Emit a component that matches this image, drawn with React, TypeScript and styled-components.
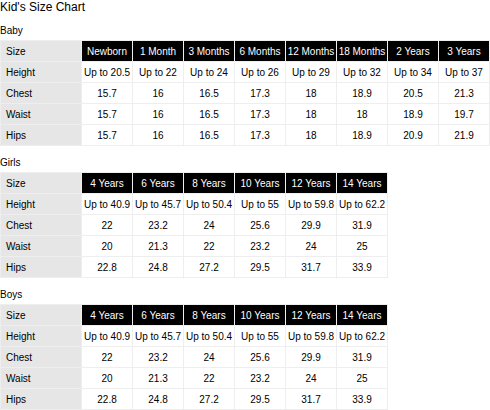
import React from 'react'
import styled, { createGlobalStyle } from 'styled-components'

const GlobalStyle = createGlobalStyle`
  html, body {
    margin: 0;
    padding: 0;
    background: #fff;
  }
  body {
    font-family: "Liberation Sans", Arial, sans-serif;
    color: #000;
  }
`

const Page = styled.div`
  width: 490px;
`

const Title = styled.h1`
  margin: 0 0 2px;
  font-size: 12px;
  line-height: 14px;
  font-weight: normal;
  color: #000;
`

const Section = styled.section`
  margin-top: 10px;
`

const SectionHeading = styled.h2`
  margin: 0 0 2px;
  font-size: 10px;
  line-height: 14px;
  font-weight: normal;
  color: #000;
`

const Table = styled.table`
  border-collapse: collapse;
  font-size: 10px;
  table-layout: fixed;
`

const Cell = styled.td<{ $head?: boolean }>`
  width: 50px;
  height: 20px;
  padding: 0;
  border: 1px solid #eee;
  text-align: center;
  white-space: nowrap;
  background: ${p => (p.$head ? '#000' : '#fff')};
  color: ${p => (p.$head ? '#fff' : '#000')};
`

const LabelCell = styled.th`
  width: 75px;
  height: 20px;
  padding: 0 0 0 5px;
  border: 1px solid #eee;
  text-align: left;
  font-weight: normal;
  background: #e6e6e6;
  color: #000;
`

interface Chart {
  name: string
  sizes: string[]
  rows: { label: string; values: string[] }[]
}

const charts: Chart[] = [
  {
    name: 'Baby',
    sizes: ['Newborn', '1 Month', '3 Months', '6 Months', '12 Months', '18 Months', '2 Years', '3 Years'],
    rows: [
      { label: 'Height', values: ['Up to 20.5', 'Up to 22', 'Up to 24', 'Up to 26', 'Up to 29', 'Up to 32', 'Up to 34', 'Up to 37'] },
      { label: 'Chest', values: ['15.7', '16', '16.5', '17.3', '18', '18.9', '20.5', '21.3'] },
      { label: 'Waist', values: ['15.7', '16', '16.5', '17.3', '18', '18', '18.9', '19.7'] },
      { label: 'Hips', values: ['15.7', '16', '16.5', '17.3', '18', '18.9', '20.9', '21.9'] },
    ],
  },
  {
    name: 'Girls',
    sizes: ['4 Years', '6 Years', '8 Years', '10 Years', '12 Years', '14 Years'],
    rows: [
      { label: 'Height', values: ['Up to 40.9', 'Up to 45.7', 'Up to 50.4', 'Up to 55', 'Up to 59.8', 'Up to 62.2'] },
      { label: 'Chest', values: ['22', '23.2', '24', '25.6', '29.9', '31.9'] },
      { label: 'Waist', values: ['20', '21.3', '22', '23.2', '24', '25'] },
      { label: 'Hips', values: ['22.8', '24.8', '27.2', '29.5', '31.7', '33.9'] },
    ],
  },
  {
    name: 'Boys',
    sizes: ['4 Years', '6 Years', '8 Years', '10 Years', '12 Years', '14 Years'],
    rows: [
      { label: 'Height', values: ['Up to 40.9', 'Up to 45.7', 'Up to 50.4', 'Up to 55', 'Up to 59.8', 'Up to 62.2'] },
      { label: 'Chest', values: ['22', '23.2', '24', '25.6', '29.9', '31.9'] },
      { label: 'Waist', values: ['20', '21.3', '22', '23.2', '24', '25'] },
      { label: 'Hips', values: ['22.8', '24.8', '27.2', '29.5', '31.7', '33.9'] },
    ],
  },
]

const SizeTable: React.FC<{ chart: Chart }> = ({ chart }) => (
  <Section>
    <SectionHeading>{chart.name}</SectionHeading>
    <Table>
      <tbody>
        <tr>
          <LabelCell>Size</LabelCell>
          {chart.sizes.map(s => (
            <Cell $head key={s}>{s}</Cell>
          ))}
        </tr>
        {chart.rows.map(row => (
          <tr key={row.label}>
            <LabelCell>{row.label}</LabelCell>
            {row.values.map((v, i) => (
              <Cell key={i}>{v}</Cell>
            ))}
          </tr>
        ))}
      </tbody>
    </Table>
  </Section>
)

export default function App() {
  return (
    <Page>
      <GlobalStyle />
      <Title>Kid's Size Chart</Title>
      {charts.map(c => (
        <SizeTable chart={c} key={c.name} />
      ))}
    </Page>
  )
}
